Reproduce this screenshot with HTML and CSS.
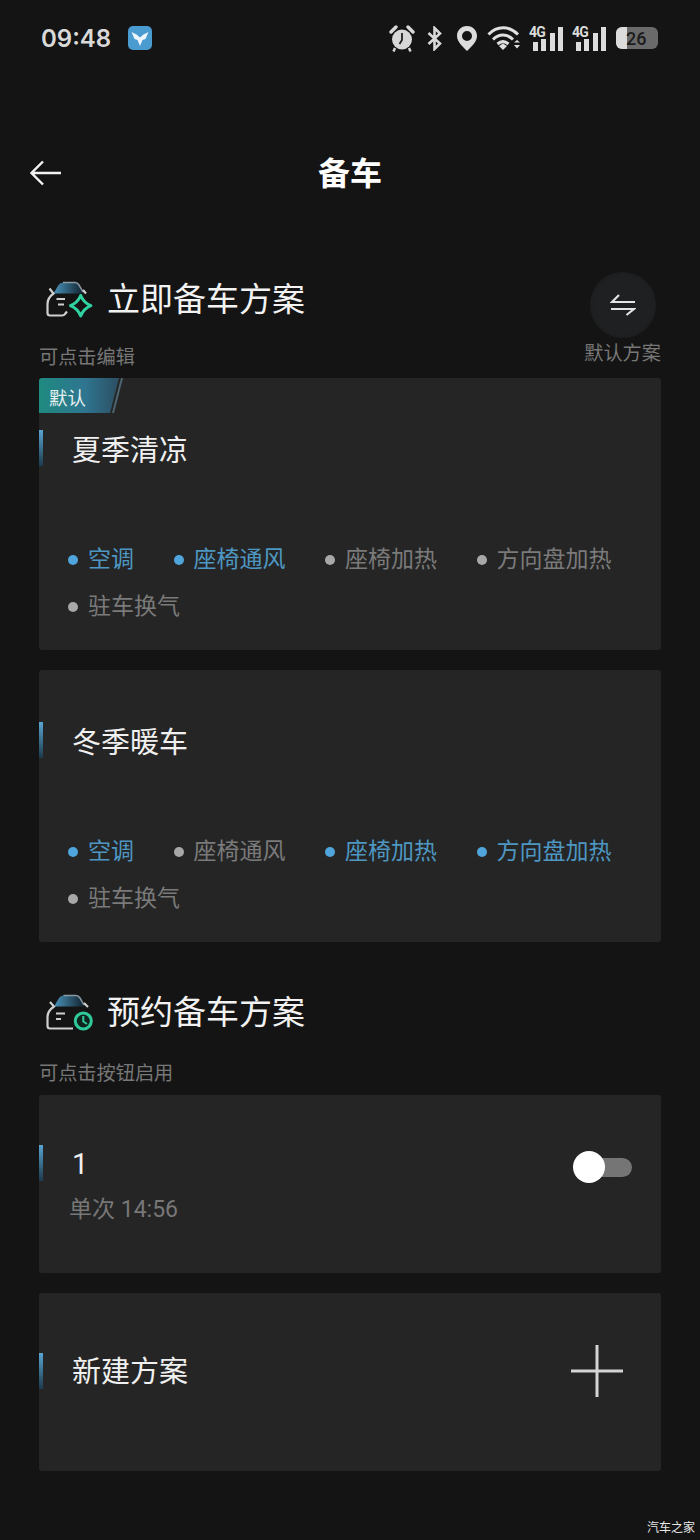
FILE: index.html
```html
<!DOCTYPE html>
<html lang="zh-CN">
<head>
    <meta charset="UTF-8">
    <meta name="viewport" content="width=device-width, initial-scale=1.0">
    <title>备车</title>
    <link rel="stylesheet" href="styles.css">
</head>
<body>
<div class="page">

    <div class="statusbar">
        <div class="status-left">
            <span class="time">09:48</span>
            <svg class="app-icon" width="24" height="24" viewBox="0 0 24 24">
                <rect width="24" height="24" rx="5" fill="#4a9bd0"/>
                <path d="M3.5 6 L8.5 8.5 L12 11.5 L15.5 8.5 L20.5 6 L17.5 13 L14.5 14 L12 20 L9.5 14 L6.5 13 Z" fill="#eef6fb"/>
            </svg>
        </div>
        <div class="status-right">
            <svg class="icon-alarm" width="26" height="27" viewBox="0 0 26 27">
                <circle cx="13" cy="14.500" r="10" fill="#d8d8d8"/>
                <path d="M2 7 L7 2 M24 7 L19 2" stroke="#d8d8d8" stroke-width="3.400" stroke-linecap="round"/>
                <path d="M6 23 L4.500 26.500 M20 23 L21.500 26.500" stroke="#d8d8d8" stroke-width="2.500"/>
                <path d="M13 8 V15 L10.500 19" stroke="#222" stroke-width="1.800" fill="none"/>
            </svg>
            <svg class="icon-bt" width="15" height="25" viewBox="0 0 15 25">
                <path d="M1.500 7 L13 17.500 L7.500 23 V2 L13 7.500 L1.500 18" stroke="#d8d8d8" stroke-width="2.600" fill="none"/>
            </svg>
            <svg width="22" height="26" viewBox="0 0 22 26">
                <path fill-rule="evenodd" d="M11 1 C5 1 1 5.500 1 11 C1 17 7 22 11 26 C15 22 21 17 21 11 C21 5.500 17 1 11 1 Z M11 6 A5 5 0 1 1 11 16 A5 5 0 1 1 11 6 Z" fill="#dcdcdc"/>
            </svg>
            <svg class="icon-wifi" width="33" height="26" viewBox="0 0 33 26">
                <path d="M1.500 9.500 C10 0.500 22 0.500 31 9.500 M6 14.500 C12 8.500 20 8.500 26 14.500 M10.500 19 C14 16 18 16 21.500 19" stroke="#e0e0e0" stroke-width="3" fill="none"/>
                <path d="M12 21 L16 18.500 L20 21 L16 25 Z" fill="#e0e0e0"/>
                <path d="M27 17.500 L30 15 L33 17.500 Z M27 20 H33 L30 23.500 Z" fill="#e0e0e0"/>
            </svg>
            <div class="signal">
                <span class="signal-type">4G</span>
                <span class="bar bar-1"></span>
                <span class="bar bar-2"></span>
                <span class="bar bar-3"></span>
                <span class="bar bar-4"></span>
            </div>
            <div class="signal">
                <span class="signal-type">4G</span>
                <span class="bar bar-1"></span>
                <span class="bar bar-2"></span>
                <span class="bar bar-3"></span>
                <span class="bar bar-4"></span>
            </div>
            <div class="battery"><span class="battery-level"></span><span class="battery-text">26</span></div>
        </div>
    </div>

    <div class="nav">
        <svg class="back" width="32" height="26" viewBox="0 0 32 26">
            <path d="M31 13 H2 M13 1.500 L1.500 13 L13 24.500" stroke="#f2f2f2" stroke-width="2.400" fill="none"/>
        </svg>
        <h1 class="nav-title">备车</h1>
        <span></span>
    </div>

    <main class="content">
        <section class="section">
            <div class="section-head">
                <div>
                    <div class="section-title-row">
                        <svg class="car-icon" width="48" height="37" viewBox="0 0 48 37">
                            <defs>
                                <linearGradient id="roof1" x1="0" y1="0" x2="1" y2="0">
                                    <stop offset="0" stop-color="#4a94bb"/>
                                    <stop offset="1" stop-color="#10202c"/>
                                </linearGradient>
                            </defs>
                            <path d="M7.500 12.500 L12.500 4 Q14 1.500 17 1.500 H29 Q31.500 1.500 33 4 L37.500 12.500 Z" fill="url(#roof1)"/>
                            <path d="M17 1.500 H29 Q31.500 1.500 33 4 L37 11" stroke="#8a9aa5" stroke-width="1.500" fill="none"/>
                            <path d="M3.500 7.500 L7.500 12.500 Q1.500 17 1.500 23 V32 Q1.500 34.500 4 34.500 H16 Q18 34.500 19 33 L21 30.500 M37 9 L40 12.500" stroke="#cfcfcf" stroke-width="2.200" fill="none"/>
                            <path d="M10.500 18 H19 M12 23.500 H18" stroke="#cfcfcf" stroke-width="1.800"/>
                            <path d="M34.700 14.500 Q37.700 21.700 44.900 24.700 Q37.700 27.700 34.700 34.900 Q31.700 27.700 24.500 24.700 Q31.700 21.700 34.700 14.500 Z" stroke="#2fd3a2" stroke-width="3" stroke-linejoin="round" fill="none"/>
                        </svg>
                        <h2 class="section-title">立即备车方案</h2>
                    </div>
                    <p class="section-sub">可点击编辑</p>
                </div>
                <div class="switch-scheme">
                    <div class="switch-circle">
                        <svg width="26" height="22" viewBox="0 0 26 22">
                            <path d="M25 8 H2 L9 1 M1 15 H24 L16.500 21" stroke="#e4e4e4" stroke-width="2.200" fill="none"/>
                        </svg>
                    </div>
                    <span class="switch-label">默认方案</span>
                </div>
            </div>

            <div class="card scheme-card">
                <div class="tag"><span class="tag-text">默认</span></div>
                <div class="card-title">夏季清凉</div>
                <div class="chips">
                    <span class="chip on">空调</span>
                    <span class="chip on">座椅通风</span>
                    <span class="chip">座椅加热</span>
                    <span class="chip">方向盘加热</span>
                    <span class="chip">驻车换气</span>
                </div>
            </div>

            <div class="card scheme-card">
                <div class="card-title">冬季暖车</div>
                <div class="chips">
                    <span class="chip on">空调</span>
                    <span class="chip">座椅通风</span>
                    <span class="chip on">座椅加热</span>
                    <span class="chip on">方向盘加热</span>
                    <span class="chip">驻车换气</span>
                </div>
            </div>
        </section>

        <section class="section section-timed">
            <div class="section-title-row">
                <svg class="car-icon" width="48" height="37" viewBox="0 0 48 37">
                    <defs>
                        <linearGradient id="roof2" x1="0" y1="0" x2="1" y2="0">
                            <stop offset="0" stop-color="#4a94bb"/>
                            <stop offset="1" stop-color="#10202c"/>
                        </linearGradient>
                    </defs>
                    <path d="M8 12.500 L13 4 Q14.500 1.500 17.500 1.500 H30 Q32.500 1.500 34 4 L38.500 12.500 Z" fill="url(#roof2)"/>
                    <path d="M17.500 1.500 H30 Q32.500 1.500 34 4 L38 11" stroke="#8a9aa5" stroke-width="1.500" fill="none"/>
                    <path d="M4 8 L8 12.500 Q1.500 17 1.500 23 V32 Q1.500 34.500 4 34.500 H27 M38 9 L42 13" stroke="#cfcfcf" stroke-width="2.200" fill="none"/>
                    <path d="M10 19.500 H19 M10 25 H15" stroke="#cfcfcf" stroke-width="1.800"/>
                    <circle cx="37.300" cy="27" r="8" stroke="#2fc99a" stroke-width="3" fill="#10241e"/>
                    <path d="M37.300 22 V27.500 L41 30" stroke="#2fc99a" stroke-width="2" fill="none"/>
                </svg>
                <h2 class="section-title">预约备车方案</h2>
            </div>
            <p class="section-sub section-sub-timed">可点击按钮启用</p>

            <div class="card timed-card">
                <div class="timed-row">
                    <div class="card-title">1</div>
                    <div class="toggle"><span class="toggle-knob"></span></div>
                </div>
                <div class="timed-desc">单次 14:56</div>
            </div>

            <div class="card new-card">
                <div class="new-row">
                    <div class="card-title">新建方案</div>
                    <svg class="plus" width="52" height="52" viewBox="0 0 52 52">
                        <path d="M26 0 V52 M0 26 H52" stroke="#d4d4d4" stroke-width="3"/>
                    </svg>
                </div>
            </div>
        </section>
    </main>

    <span class="watermark">汽车之家</span>
</div>
</body>
</html>
```

FILE: styles.css
```css
* {
    box-sizing: border-box;
}

body {
    margin: 0;
    background-color: #141414;
    font-family: Roboto, "Noto Sans CJK SC", sans-serif;
}

.page {
    position: relative;
    width: 700px;
    height: 1540px;
    overflow: hidden;
}

/* status bar */
.statusbar {
    display: flex;
    justify-content: space-between;
    align-items: center;
    height: 78px;
    padding: 0 42px 2px 41px;
}

.status-left {
    display: flex;
    align-items: center;
    gap: 17px;
}

.time {
    font-family: Inter, sans-serif;
    font-size: 24px;
    font-weight: 600;
    color: #d9d9d9;
}

.status-right {
    display: flex;
    align-items: center;
    gap: 9px;
}

.icon-alarm {
    margin-right: 3px;
}

.icon-bt {
    margin-right: 5px;
}

.signal {
    position: relative;
    display: flex;
    align-items: flex-end;
    gap: 3.3px;
    width: 34px;
    height: 26px;
    padding-left: 4px;
}

.signal-type {
    position: absolute;
    left: 0;
    top: 1px;
    font-family: Roboto, sans-serif;
    font-size: 14px;
    font-weight: 700;
    letter-spacing: -0.8px;
    line-height: 12px;
    color: #dcdcdc;
}

.bar {
    width: 5px;
    background-color: #dcdcdc;
}

.bar-1 { height: 9px; }
.bar-2 { height: 12px; }
.bar-3 { height: 18px; }
.bar-4 { height: 24px; }

.battery {
    position: relative;
    width: 42px;
    height: 22px;
    margin-left: 1px;
    border-radius: 6px;
    background-color: #6a6a6a;
    overflow: hidden;
}

.battery-level {
    position: absolute;
    left: 0;
    top: 0;
    width: 11px;
    height: 100%;
    background-color: #dcdcdc;
}

.battery-text {
    position: absolute;
    left: 10px;
    top: 0;
    font-family: Roboto, sans-serif;
    font-size: 18px;
    font-weight: 500;
    line-height: 23px;
    color: #1c1c1c;
}

/* nav */
.nav {
    display: grid;
    grid-template-columns: 1fr auto 1fr;
    align-items: center;
    height: 48px;
    margin: 71px 0 75px;
    padding: 0 30px;
}

.nav-title {
    margin: 2px 0 0;
    font-size: 32px;
    font-weight: 700;
    line-height: 46px;
    color: #fff;
}

.content {
    padding: 0 39px;
}

/* section heads */
.section-head {
    display: flex;
    justify-content: space-between;
}

.section-title-row {
    display: flex;
    align-items: center;
    gap: 13px;
    height: 54px;
    padding-left: 7px;
}

.section-title {
    margin: 2px 0 0;
    font-size: 33px;
    font-weight: 400;
    line-height: 54px;
    color: #f2f2f2;
}

.section-sub {
    margin: 20px 0 8px;
    font-size: 19.2px;
    line-height: 24px;
    color: #777;
}

.section-sub-timed {
    margin: 23px 0 9px;
}

.switch-scheme {
    display: flex;
    flex-direction: column;
    align-items: center;
}

.switch-circle {
    display: flex;
    justify-content: center;
    align-items: center;
    width: 66px;
    height: 66px;
    border-radius: 50%;
    background: radial-gradient(circle, #1e2022 60%, #161718 100%);
}

.switch-label {
    margin-top: 4px;
    font-size: 19.2px;
    line-height: 24px;
    color: #777;
}

.section-timed {
    margin-top: 43px;
}

/* cards */
.card {
    position: relative;
    margin-bottom: 20px;
    border-radius: 3px;
    background-color: #252525;
}

.scheme-card {
    height: 272px;
    padding-top: 53px;
}

.timed-card {
    height: 178px;
    padding-top: 48px;
}

.new-card {
    height: 178px;
    padding-top: 59px;
}

.card-title {
    position: relative;
    padding-left: 33px;
    font-size: 29px;
    line-height: 40px;
    color: #f0f0f0;
}

.card-title::before {
    content: "";
    position: absolute;
    left: 0;
    top: -1px;
    width: 4px;
    height: 36px;
    background: linear-gradient(#5aa5d2, #1c3a4c);
}

.timed-row .card-title::before {
    top: 2px;
}

.new-row .card-title::before {
    top: 1px;
}

.tag {
    position: absolute;
    left: 0;
    top: 0;
    width: 84px;
    height: 35px;
}

.tag::before {
    content: "";
    position: absolute;
    inset: 0;
    background: linear-gradient(90deg, #1f8a80, #2f7590 55%, #2c4a5c);
    border-top-left-radius: 3px;
    clip-path: polygon(0 0, 80px 0, 71px 100%, 0 100%);
}

.tag::after {
    content: "";
    position: absolute;
    inset: 0;
    background-color: #4d6670;
    clip-path: polygon(82px 0, 84px 0, 75px 100%, 73px 100%);
}

.tag-text {
    position: relative;
    z-index: 1;
    display: block;
    padding-left: 10px;
    font-size: 18.5px;
    line-height: 42px;
    color: #e6f0f0;
}

.chips {
    display: flex;
    flex-wrap: wrap;
    column-gap: 39.5px;
    margin-top: 65px;
    padding-left: 29px;
}

.chip {
    display: flex;
    align-items: center;
    gap: 10px;
    font-size: 23px;
    line-height: 47px;
    color: #7a7a7a;
}

.chip::before {
    content: "";
    width: 10px;
    height: 10px;
    border-radius: 50%;
    background-color: #a8a8a8;
}

.chip.on {
    color: #4d97c2;
}

.chip.on::before {
    background-color: #4fa5dc;
}

/* timed + new */
.timed-row {
    display: flex;
    justify-content: space-between;
    padding-right: 29px;
}

.timed-row .card-title {
    line-height: 42px;
}

.toggle {
    position: relative;
    width: 59px;
    height: 32px;
    margin-top: 8px;
}

.toggle::before {
    content: "";
    position: absolute;
    left: 14px;
    right: 0;
    top: 7px;
    height: 19px;
    border-radius: 10px;
    background-color: #757575;
}

.toggle-knob {
    position: absolute;
    left: 0;
    top: 0;
    width: 32px;
    height: 32px;
    border-radius: 50%;
    background-color: #fff;
}

.timed-desc {
    margin-top: 8px;
    padding-left: 30px;
    font-size: 23px;
    line-height: 34px;
    color: #777;
}

.new-row {
    display: flex;
    justify-content: space-between;
    align-items: center;
    height: 40px;
    padding-right: 38px;
}

.plus {
    margin-top: -2px;
}

.watermark {
    position: absolute;
    right: 5px;
    bottom: 5px;
    font-size: 12px;
    line-height: 14px;
    color: #e8e8e8;
}
```
